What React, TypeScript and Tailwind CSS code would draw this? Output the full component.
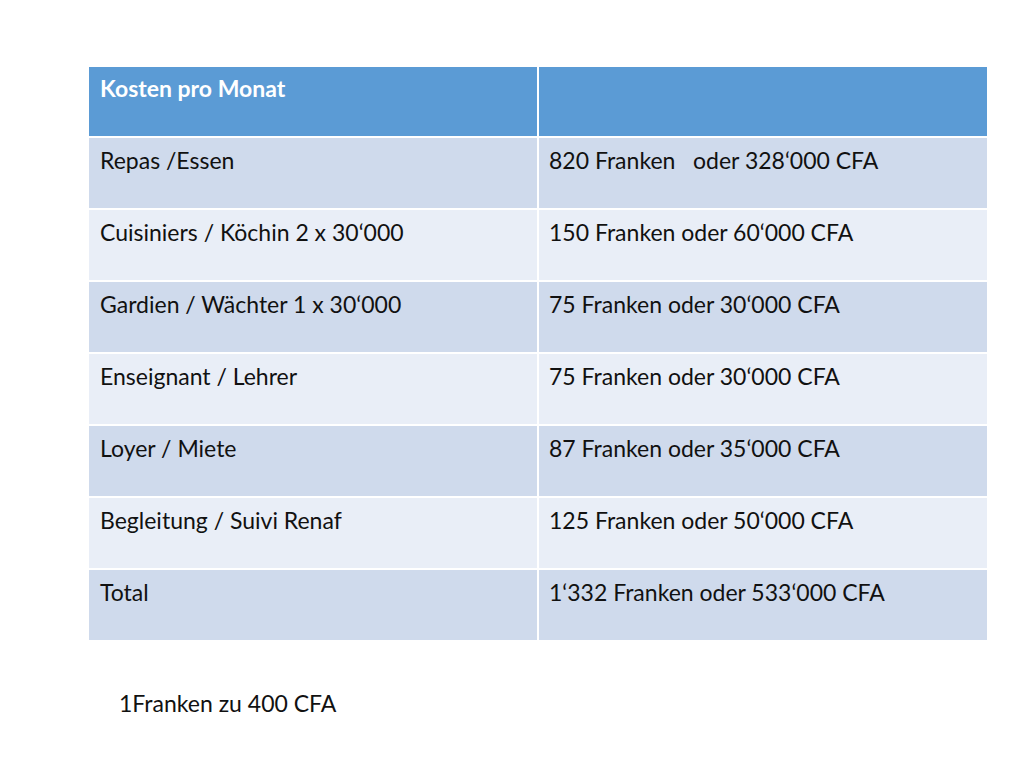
import React from "react";

const rows: [string, string][] = [
  ["Repas /Essen", "820 Franken   oder 328\u2018000 CFA"],
  ["Cuisiniers / Köchin 2 x 30\u2018000", "150 Franken oder 60\u2018000 CFA"],
  ["Gardien / Wächter 1 x 30\u2018000", "75 Franken oder 30\u2018000 CFA"],
  ["Enseignant / Lehrer", "75 Franken oder 30\u2018000 CFA"],
  ["Loyer / Miete", "87 Franken oder 35\u2018000 CFA"],
  ["Begleitung / Suivi Renaf", "125 Franken oder 50\u2018000 CFA"],
  ["Total", "1\u2018332 Franken oder 533\u2018000 CFA"],
];

export default function App() {
  return (
    <div
      className="w-[1024px] h-[768px] bg-white text-[#111] overflow-hidden"
      style={{ fontFamily: "Lato, 'Open Sans', sans-serif" }}
    >
      <div className="pt-[67px] pl-[89px]">
        <div className="grid grid-cols-[448px_448px] gap-[2px] w-[898px] text-[23px] leading-[28px]">
          <div className="h-[69px] bg-[#5b9bd5] px-[11px] pt-[7px] font-bold text-white">
            Kosten pro Monat
          </div>
          <div className="h-[69px] bg-[#5b9bd5]" />
          {rows.map(([a, b], i) => {
            const bg = i % 2 === 0 ? "bg-[#cfdaec]" : "bg-[#e9eef7]";
            return (
              <React.Fragment key={a}>
                <div className={`h-[70px] ${bg} px-[11px] pt-[8px] whitespace-pre`}>{a}</div>
                <div className={`h-[70px] ${bg} px-[10px] pt-[8px] whitespace-pre`}>{b}</div>
              </React.Fragment>
            );
          })}
        </div>
        <div className="mt-[49px] ml-[30px] text-[23px] leading-[28px]">1Franken zu 400 CFA</div>
      </div>
    </div>
  );
}
